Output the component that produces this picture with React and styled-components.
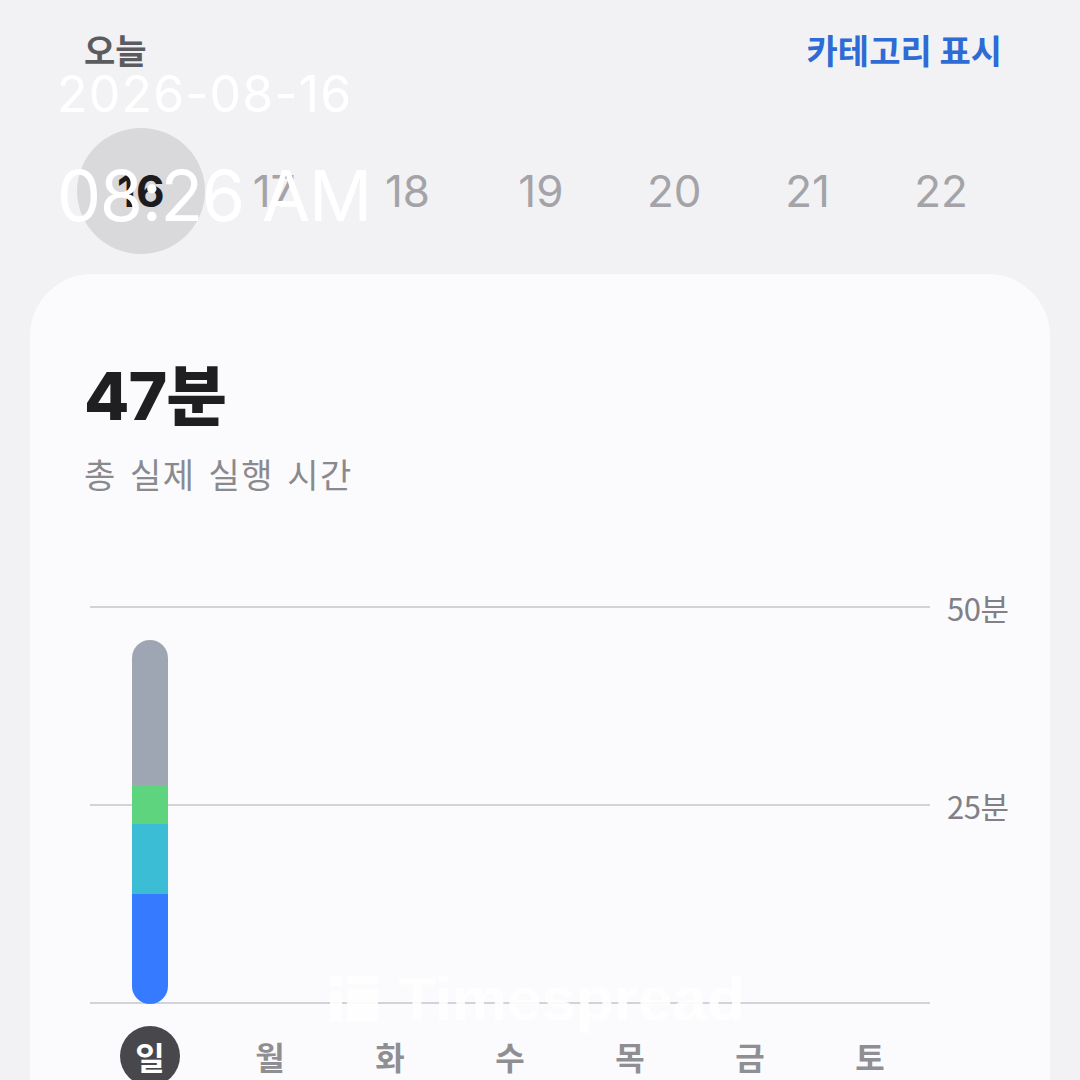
import React from 'react';
import styled, { createGlobalStyle } from 'styled-components';

const GlobalStyle = createGlobalStyle`
  html, body {
    margin: 0;
    padding: 0;
    background: #f2f2f4;
  }
  body {
    font-family: Inter, "Noto Sans CJK KR", sans-serif;
  }
`;

const DATES = [16, 17, 18, 19, 20, 21, 22];
const DAYS = ['일', '월', '화', '수', '목', '금', '토'];
const PX_PER_MIN = 396 / 50;

// minutes per category, bottom to top
const SEGMENTS = [
  { color: '#367bff', minutes: 13.9 },
  { color: '#3cbdd6', minutes: 8.8 },
  { color: '#5ed47f', minutes: 4.9 },
  { color: '#9fa6b3', minutes: 18.4 },
];

export default function App() {
  return (
    <Page>
      <GlobalStyle />
      <Header>
        <TodayLabel>오늘</TodayLabel>
        <CategoryLink>카테고리 표시</CategoryLink>
      </Header>

      <DateStrip>
        {DATES.map((d, i) => (
          <DateCell key={d} active={i === 0}>
            {d}
          </DateCell>
        ))}
      </DateStrip>

      <Card>
        <Total>47분</Total>
        <Subtitle>총 실제 실행 시간</Subtitle>

        <Chart>
          <GridLines>
            <GridRow>
              <Line />
              <AxisLabel>50분</AxisLabel>
            </GridRow>
            <GridRow>
              <Line />
              <AxisLabel>25분</AxisLabel>
            </GridRow>
            <GridRow>
              <Line />
            </GridRow>
          </GridLines>
          <Bars>
            {DAYS.map((d, i) => (
              <BarSlot key={d}>
                {i === 0 && (
                  <Bar>
                    {[...SEGMENTS].reverse().map((s) => (
                      <Segment
                        key={s.color}
                        color={s.color}
                        style={{ height: `${s.minutes * PX_PER_MIN}px` }}
                      />
                    ))}
                  </Bar>
                )}
              </BarSlot>
            ))}
          </Bars>
        </Chart>

        <DayRow>
          {DAYS.map((d, i) => (
            <DayCell key={d} active={i === 0}>
              {d}
            </DayCell>
          ))}
        </DayRow>
      </Card>

      <Stamp>
        <StampDate>2026-08-16</StampDate>
        <StampTime>08:26 AM</StampTime>
      </Stamp>

      <Watermark>
        <svg width="48" height="46" viewBox="0 0 48 46">
          <rect x="0" y="0" width="12" height="10" fill="#fff" />
          <rect x="0" y="15" width="12" height="31" fill="#fff" />
          <rect x="17" y="0" width="31" height="8" fill="#fff" />
          <rect x="17" y="13" width="31" height="33" fill="#fff" />
        </svg>
        <WatermarkText>Timespread</WatermarkText>
      </Watermark>
    </Page>
  );
}

const Page = styled.div`
  position: relative;
  width: 1080px;
  height: 1080px;
  overflow: hidden;
  background: #f2f2f4;
`;

const Header = styled.div`
  display: flex;
  justify-content: space-between;
  align-items: center;
  height: 104px;
  padding: 0 78px 0 84px;
`;

const TodayLabel = styled.div`
  font-family: "Noto Sans CJK KR", sans-serif;
  font-size: 34px;
  font-weight: 600;
  line-height: 40px;
  margin-top: -4px;
  color: #5c5c60;
`;

const CategoryLink = styled.div`
  font-family: "Noto Sans CJK KR", sans-serif;
  font-size: 34px;
  font-weight: 600;
  line-height: 40px;
  margin-top: -4px;
  color: #2e6bd4;
`;

const DateStrip = styled.div`
  display: grid;
  grid-template-columns: repeat(7, 133.4px);
  margin: 24px 0 0 74px;
  height: 126px;
`;

const DateCell = styled.div`
  display: flex;
  align-items: center;
  justify-content: center;
  justify-self: center;
  width: 128px;
  height: 126px;
  border-radius: 50%;
  background: ${(p) => (p.active ? '#d9d9dc' : 'transparent')};
  font-family: Inter, sans-serif;
  font-size: 44px;
  font-weight: ${(p) => (p.active ? 700 : 400)};
  color: ${(p) => (p.active ? '#1c1c1e' : '#a4a4a8')};
`;

const Card = styled.div`
  margin: 20px 30px 0;
  height: 900px;
  border-radius: 62px;
  background: #fbfbfd;
  padding-top: 82px;
`;

const Total = styled.div`
  padding-left: 54px;
  font-family: Inter, "Noto Sans CJK KR", sans-serif;
  font-size: 66px;
  font-weight: 800;
  line-height: 80px;
  color: #1f1f21;
  letter-spacing: -1px;
`;

const Subtitle = styled.div`
  margin-top: 18px;
  padding-left: 54px;
  font-family: "Noto Sans CJK KR", sans-serif;
  font-size: 34px;
  line-height: 40px;
  letter-spacing: 1.5px;
  word-spacing: 4px;
  color: #8a8a8e;
`;

const Chart = styled.div`
  position: relative;
  margin: 113px 0 0 60px;
  width: 840px;
  height: 396px;
`;

const GridLines = styled.div`
  position: absolute;
  inset: -1px 0 -1px 0;
  display: flex;
  flex-direction: column;
  justify-content: space-between;
`;

const GridRow = styled.div`
  display: flex;
  align-items: center;
  height: 2px;
`;

const Line = styled.div`
  flex: 0 0 840px;
  height: 2px;
  background: #d3d3d7;
`;

const AxisLabel = styled.div`
  margin-left: 17px;
  font-family: "Noto Sans CJK KR", sans-serif;
  font-size: 31px;
  color: #808085;
  white-space: nowrap;
  letter-spacing: -0.5px;
`;

const Bars = styled.div`
  position: absolute;
  inset: 0;
  display: grid;
  grid-template-columns: repeat(7, 120px);
  align-items: end;
  justify-items: center;
`;

const BarSlot = styled.div`
  display: flex;
  align-items: flex-end;
  height: 100%;
`;

const Bar = styled.div`
  display: flex;
  flex-direction: column;
  width: 36px;
  border-radius: 18px;
  overflow: hidden;
  margin-bottom: -1px;
`;

const Segment = styled.div`
  background: ${(p) => p.color};
`;

const DayRow = styled.div`
  display: grid;
  grid-template-columns: repeat(7, 120px);
  margin: 23px 0 0 60px;
  justify-items: center;
`;

const DayCell = styled.div`
  display: flex;
  align-items: center;
  justify-content: center;
  width: 60px;
  height: 60px;
  border-radius: 50%;
  background: ${(p) => (p.active ? '#48484c' : 'transparent')};
  font-family: "Noto Sans CJK KR", sans-serif;
  font-size: 32px;
  font-weight: 600;
  color: ${(p) => (p.active ? '#ffffff' : '#8e8e93')};
`;

const Stamp = styled.div`
  position: absolute;
  left: 57px;
  top: 62px;
  color: #ffffff;
  font-family: Inter, sans-serif;
  font-weight: 400;
`;

const StampDate = styled.div`
  font-size: 50px;
  line-height: 64px;
  letter-spacing: 1.2px;
`;

const StampTime = styled.div`
  margin-top: 28px;
  font-size: 70px;
  line-height: 84px;
  letter-spacing: -1.4px;
`;

const Watermark = styled.div`
  position: absolute;
  left: 330px;
  top: 976px;
  display: flex;
  align-items: center;
  gap: 20px;
  opacity: 0.9;
`;

const WatermarkText = styled.div`
  font-family: "Liberation Sans", sans-serif;
  font-size: 62px;
  font-weight: 700;
  line-height: 46px;
  color: #ffffff;
  letter-spacing: 0;
`;
